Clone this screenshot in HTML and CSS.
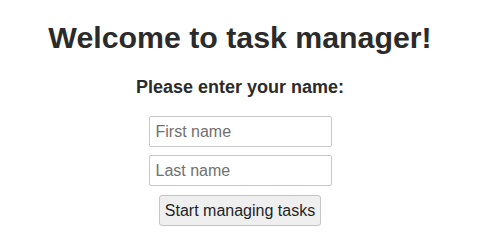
FILE: index.html
```html
<!DOCTYPE html>
<html>
<head>
<meta charset="utf-8">
<link rel="stylesheet" href="styles.css">
</head>
<body>
<main class="page">
  <h1 class="title">Welcome to task manager!</h1>
  <h3 class="subtitle">Please enter your name:</h3>
  <form class="form">
    <input class="field" type="text" placeholder="First name">
    <input class="field" type="text" placeholder="Last name">
    <button class="btn" type="button">Start managing tasks</button>
  </form>
</main>
</body>
</html>
```
FILE: styles.css
```css
html, body {
  margin: 0;
  padding: 0;
  background: #ffffff;
}
body {
  font-family: "Liberation Sans", Arial, sans-serif;
  color: #2b2b2b;
}
.page {
  width: 480px;
  display: flex;
  flex-direction: column;
  align-items: center;
}
.title {
  margin: 20px 0 0;
  font-size: 30.3px;
  font-weight: 700;
  line-height: 35px;
}
.subtitle {
  margin: 22px 0 0;
  font-size: 18px;
  font-weight: 700;
  line-height: 21px;
}
.form {
  margin-top: 18px;
  display: flex;
  flex-direction: column;
  align-items: center;
  gap: 8px;
}
.field {
  box-sizing: border-box;
  width: 183px;
  height: 31px;
  padding: 0 6px;
  font-family: "Liberation Sans", Arial, sans-serif;
  font-size: 16px;
  color: #2b2b2b;
  border: 1px solid #c8c8c8;
  border-radius: 2px;
  background: #fff;
}
.field::placeholder {
  color: #707070;
}
.btn {
  box-sizing: border-box;
  margin-top: 1px;
  height: 31px;
  padding: 0 5px;
  font-family: "Liberation Sans", Arial, sans-serif;
  font-size: 16px;
  color: #1f1f1f;
  background: #efefef;
  border: 1px solid #c4c4c4;
  border-radius: 3px;
}
```
